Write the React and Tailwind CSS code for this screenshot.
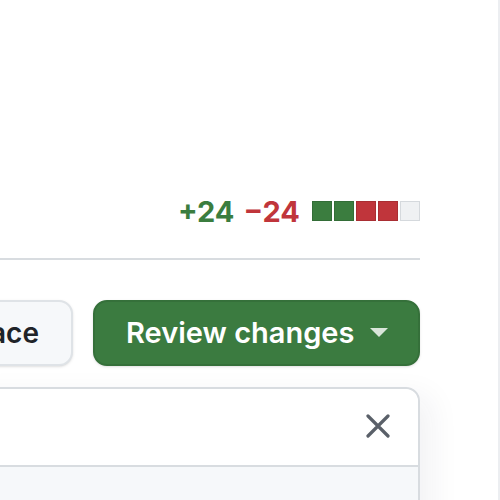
import React from "react";

const Square = ({ kind }) => {
  const styles = {
    add: "bg-[#3b7d3f] border-[#336d37]",
    del: "bg-[#c0353b] border-[#a92e33]",
    neutral: "bg-[#eff1f3] border-[#d5d9dd]",
  };
  return <span className={`w-[20px] h-[20px] border ${styles[kind]}`} />;
};

const App = () => {
  const diffstat = ["add", "add", "del", "del", "neutral"];

  return (
    <div
      className="w-[500px] h-[500px] bg-white overflow-hidden border-r-2 border-[#eceef1]"
      style={{ fontFamily: "Inter, 'Liberation Sans', sans-serif" }}
    >
      <div className="ml-[-40px] w-[460px] pt-[196px]">
        {/* diff stats */}
        <div className="flex items-center justify-end h-[30px]">
          <span className="text-[29px] font-bold text-[#3b7d3f] leading-none">+24</span>
          <span className="ml-[9px] text-[29px] font-bold text-[#c0353b] leading-none">−24</span>
          <div className="ml-[12px] flex gap-[2px]">
            {diffstat.map((k, i) => (
              <Square key={i} kind={k} />
            ))}
          </div>
        </div>

        <div className="mt-[32px] border-t-2 border-[#d8dce0]" />

        {/* actions */}
        <div className="mt-[40px] flex justify-end gap-[20px]">
          <button className="shrink-0 h-[66px] px-[32px] rounded-[14px] bg-[#f6f8fa] border-2 border-[#dfe3e7] text-[28px] font-semibold text-[#1f2328] shadow-sm whitespace-nowrap">
            Open in workspace
          </button>
          <button className="shrink-0 h-[66px] w-[327px] pl-[31px] pr-[30px] rounded-[14px] bg-[#3b7b40] border-2 border-[#35703a] text-[29px] font-semibold text-white flex items-center justify-between shadow-sm whitespace-nowrap">
            <span>Review changes</span>
            <svg width="18" height="10" viewBox="0 0 18 10">
              <path d="M0 0 L18 0 L9 9 Z" fill="#d9e6da" />
            </svg>
          </button>
        </div>

        {/* review panel */}
        <div className="mt-[21px] rounded-t-[14px] border-2 border-[#d8dce0] shadow-[12px_8px_30px_rgba(30,40,60,0.06)]">
          <div className="h-[78px] bg-white rounded-t-[14px] flex items-center justify-end pr-[28px] border-b-2 border-[#d8dce0]">
            <svg width="24" height="24" viewBox="0 0 24 24" className="mt-[-2px]">
              <path d="M2 2 L22 22 M22 2 L2 22" stroke="#5a6069" strokeWidth="3.2" strokeLinecap="round" />
            </svg>
          </div>
          <div className="h-[60px] bg-[#f6f8fa]" />
        </div>
      </div>
    </div>
  );
};

export default App;
